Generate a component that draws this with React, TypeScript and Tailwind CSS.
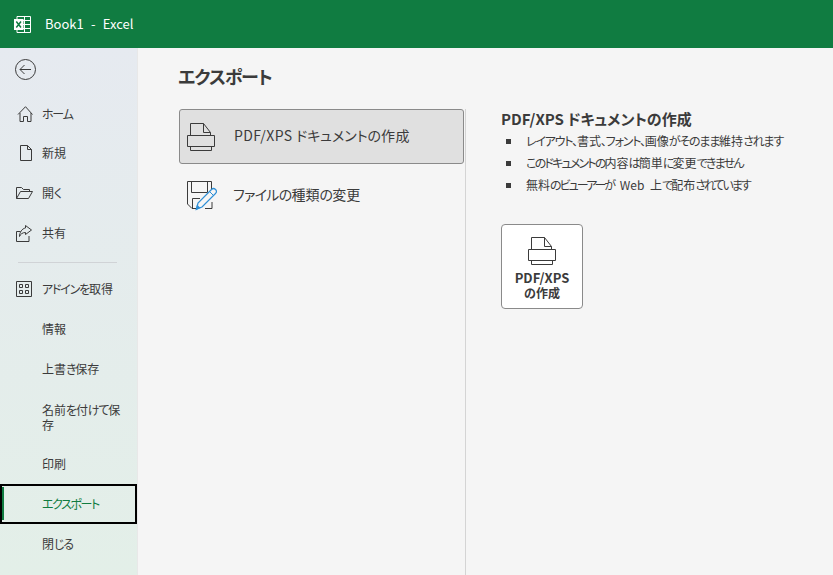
import type { ReactNode } from "react";

const font = "font-['Noto_Sans_CJK_JP','Noto_Sans',sans-serif] [font-feature-settings:'palt']";

// kana in the reference's UI font is much narrower than kanji, so squeeze only those runs
function Jp({ text, squeeze = "tracking-[-1.2px]" }: { text: string; squeeze?: string }) {
  return (
    <>
      {text.split(/([ぁ-んァ-ヶー、]+)/).map((part, i) =>
        i % 2 === 1 ? (
          <span key={i} className={squeeze}>{part}</span>
        ) : (
          <span key={i}>{part}</span>
        )
      )}
    </>
  );
}

function HomeIcon() {
  return (
    <svg width="18" height="18" viewBox="0 0 18 18" fill="none" stroke="#3b3b3b" strokeWidth="1">
      <path d="M2 9.500 9.500 1.700l7 7.800M4 8v8.500h3.500v-5h4v5H15V8" />
    </svg>
  );
}

function NewIcon() {
  return (
    <svg width="14" height="18" viewBox="0 0 14 18" fill="none" stroke="#3b3b3b" strokeWidth="1">
      <path d="M2.500 1.500h7l4 4v11h-11zM9.500 1.500v4h4" />
    </svg>
  );
}

function OpenIcon() {
  return (
    <svg width="18" height="14" viewBox="0 0 18 14" fill="none" stroke="#3b3b3b" strokeWidth="1">
      <path d="M.5 12.500v-11h5l2 2h6v2M.5 12.500h12l4-7H4.500l-4 7" />
    </svg>
  );
}

function ShareIcon() {
  return (
    <svg width="18" height="17" viewBox="0 0 18 17" fill="none" stroke="#3b3b3b" strokeWidth="1">
      <path d="M4.500 6.500H.5v10h12.500V11" />
      <path d="M9.500.5l6 4.500-6 4.500V7.500C6.500 7.500 4.500 9 3.500 11.500 3.500 7.500 6 3.500 9.500 3z" />
    </svg>
  );
}

function AddinIcon() {
  return (
    <svg width="18" height="16" viewBox="0 0 18 16" fill="none" stroke="#3b3b3b" strokeWidth="1">
      <path d="M.5.5h15v15H.5zM3.500 3.500h3v3h-3zM9.500 3.500h3v3h-3zM3.500 9.500h3v3h-3zM9.500 9.500h3v3h-3z" />
    </svg>
  );
}

function ExcelIcon() {
  return (
    <svg width="17" height="17" viewBox="0 0 17 17" fill="none">
      <path d="M3 .5h13.500v16H3z" stroke="#fff" />
      <path d="M3 4.500h13.500M3 8.500h13.500M3 12.500h13.500M10.500.5v16" stroke="#fff" />
      <rect x="0" y="3" width="9.500" height="11" fill="#fff" />
      <path d="M2.300 5.500 7 11.500M7 5.500l-4.700 6" stroke="#107c41" strokeWidth="1.500" />
    </svg>
  );
}

function PrinterIcon() {
  return (
    <svg width="28" height="28" viewBox="0 0 28 28" fill="none" stroke="#3b3b3b" strokeWidth="1">
      <path d="M3.500 12V.5h13l7 9V12" />
      <path d="M16.500.5v9h7" />
      <path d="M.5 12.500h27v11H.5z" />
      <path d="M3.500 23.500v4h21v-4" />
    </svg>
  );
}

function SaveEditIcon() {
  return (
    <svg width="31" height="31" viewBox="0 0 31 31" fill="none">
      <path d="M25.500 11V1.500H1.500V24L6 28.500h5M19 28.500h7V22" stroke="#3b3b3b" />
      <path d="M5.500 1.500v11h16v-11M6.500 28V18.500H14" stroke="#3b3b3b" />
      <path d="M10.500 29 12 23 25.500 9.500a2.600 2.600 0 0 1 4 4L16 27z" stroke="#2e8fd6" strokeWidth="1.200" fill="#f5f5f5" />
      <path d="M9.500 30.500 11 24.500l3.500 3.500z" fill="#2e8fd6" />
      <path d="M23.500 11.500l4 4" stroke="#2e8fd6" />
    </svg>
  );
}

function NavItem({ icon, label, className }: { icon?: ReactNode; label: string; className?: string }) {
  return (
    <div className={`flex items-center h-10 text-[12px] text-[#3b3b3b] ${className ?? ""}`}>
      <div className="w-[42px] shrink-0 flex justify-center pl-[9px] pr-[1px]">{icon}</div>
      <span><Jp text={label} /></span>
    </div>
  );
}

function Bullet({ text, squeeze }: { text: string; squeeze: string }) {
  return (
    <li className="flex items-center h-[22px]">
      <span className="w-[5px] h-[5px] bg-[#3b3b3b] ml-[5px] mr-[15px]" />
      <span className="whitespace-pre [word-spacing:3px]"><Jp text={text} squeeze={squeeze} /></span>
    </li>
  );
}

export default function App() {
  return (
    <div className={`w-[833px] h-[575px] overflow-hidden flex flex-col bg-[#f5f5f5] ${font}`}>
      {/* Title bar */}
      <header className="h-12 shrink-0 bg-[#107c41] flex items-center text-white text-[13px]">
        <div className="ml-[14px] mr-[14px] flex"><ExcelIcon /></div>
        <span className="whitespace-pre [word-spacing:.75px]">Book1  -  Excel</span>
      </header>

      <div className="flex flex-1 min-h-0">
        {/* Backstage nav */}
        <aside className="w-[138px] shrink-0 flex flex-col bg-gradient-to-b from-[#e6eaf0] to-[#e3efe8] border-r border-[#e8e8e8]">
          <div className="h-[42px] flex items-center pl-[15px]">
            <svg width="21" height="21" viewBox="0 0 21 21" fill="none" stroke="#3b3b3b" strokeWidth="1">
              <circle cx="10.500" cy="10.500" r="10" />
              <path d="M16 10.500H5M9.500 6l-4.500 4.500 4.500 4.500" />
            </svg>
          </div>
          <NavItem icon={<HomeIcon />} label="ホーム" className="mt-1" />
          <NavItem icon={<NewIcon />} label="新規" className="-mt-px" />
          <NavItem icon={<OpenIcon />} label="開く" />
          <NavItem icon={<ShareIcon />} label="共有" />
          <div className="h-px bg-[#d0d3d6] ml-[18px] mr-5 mt-[9px] mb-[6px]" />
          <NavItem icon={<AddinIcon />} label="アドインを取得" />
          <NavItem label="情報" />
          <NavItem label="上書き保存" />
          <div className="h-[55px] flex items-center pl-[42px] text-[12px] leading-[15px] text-[#3b3b3b]">
            <span><Jp text="名前を付けて保" /><br />存</span>
          </div>
          <NavItem label="印刷" />
          <div className="relative flex items-center h-10 pl-10 text-[12px] text-[#107c41] border-2 border-black">
            <span className="absolute left-0 top-px bottom-[2px] w-[2px] bg-[#107c41]" />
            <span><Jp text="エクスポート" squeeze="tracking-[-1.4px]" /></span>
          </div>
          <NavItem label="閉じる" />
        </aside>

        {/* Main */}
        <main className="flex-1 min-w-0 flex flex-col">
          <h1 className="ml-10 mt-[15px] h-[46px] text-[18px] leading-[26px] font-bold text-[#3b3b3b]">
            <Jp text="エクスポート" squeeze="tracking-[-1px]" />
          </h1>
          <div className="flex flex-1 min-h-0">
            {/* Export types */}
            <div className="w-[328px] shrink-0 pl-[41px] flex flex-col border-r border-[#d4d4d4]">
              <div className="h-[55px] mr-px flex items-center bg-[#e0e0e0] border border-[#8a8a8a] rounded-[3px] pl-[7px] text-[14px] text-[#3b3b3b]">
                <PrinterIcon />
                <span className="ml-[19px] mb-[2px] tracking-[.4px] whitespace-pre">PDF/XPS <Jp text="ドキュメントの作成" squeeze="tracking-[0px]" /></span>
              </div>
              <div className="h-[62px] flex items-center pl-[7px] text-[14px] text-[#3b3b3b]">
                <SaveEditIcon />
                <span className="ml-[16px] mb-[2px]"><Jp text="ファイルの種類の変更" squeeze="tracking-[-.7px]" /></span>
              </div>
            </div>

            {/* Details */}
            <section className="pl-[35px] text-[#3b3b3b]">
              <h2 className="text-[15px] leading-5 font-bold mb-[1px] whitespace-pre">PDF/XPS <Jp text="ドキュメントの作成" squeeze="tracking-[0px]" /></h2>
              <ul className="text-[12px]">
                <Bullet text="レイアウト、書式、フォント、画像がそのまま維持されます" squeeze="tracking-[-1.2px]" />
                <Bullet text="このドキュメントの内容は簡単に変更できません" squeeze="tracking-[-1.8px]" />
                <Bullet text="無料のビューアーが Web 上で配布されています" squeeze="tracking-[-2px]" />
              </ul>
              <button className="mt-[28px] w-[82px] h-[85px] bg-white border border-[#8a8a8a] rounded-[4px] flex flex-col items-center pt-[12px] text-[13px] leading-[15px] font-bold text-[#3b3b3b]">
                <PrinterIcon />
                <span className="mt-[5px]">PDF/XPS<br /><span className="text-[12px]">の作成</span></span>
              </button>
            </section>
          </div>
        </main>
      </div>
    </div>
  );
}
